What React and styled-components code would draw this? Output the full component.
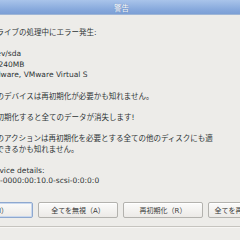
import React from "react";
import styled, { createGlobalStyle } from "styled-components";

const Global = createGlobalStyle`
  html, body { margin: 0; padding: 0; background: #edece9; }
  #root { width: 240px; height: 240px; overflow: hidden; }
`;

const Window = styled.div`
  width: 240px;
  height: 240px;
  overflow: hidden;
  display: flex;
  flex-direction: column;
  background: #edece9;
  font-family: "DejaVu Sans", "Noto Sans CJK JP", sans-serif;
  color: #2e3436;
`;

const TitleBar = styled.div`
  height: 14px;
  flex: none;
  display: flex;
  align-items: center;
  justify-content: center;
  background: linear-gradient(#a9c4ea, #86a8dc 70%, #7c9fd5);
  border-bottom: 1px solid #9fb6d6;
  color: #ffffff;
  font-size: 7.5px;
  text-shadow: 0 0 1px rgba(40, 70, 120, 0.6);
  padding-left: 3px;
`;

const Body = styled.div`
  flex: none;
  margin-left: -11px;
  padding-top: 13px;
  font-size: 7.5px;
  line-height: 10.6px;
  white-space: nowrap;
`;

const Para = styled.p`
  margin: 0 0 10.6px;
  &:last-child { margin-bottom: 0; }
`;

const ButtonRow = styled.div`
  flex: none;
  display: flex;
  gap: 5px;
  margin-left: -47px;
  margin-top: 15.5px;
`;

const Button = styled.div`
  flex: none;
  width: 80px;
  height: 16px;
  box-sizing: border-box;
  display: flex;
  align-items: center;
  justify-content: center;
  border-radius: 2px;
  border: 1px solid ${(p) => (p.$focused ? "#8ea8cf" : "#b3b2ae")};
  background: linear-gradient(#fbfbfa, #eceae7);
  box-shadow: ${(p) => (p.$focused ? "inset 0 0 0 1px #c9d8ee" : "inset 0 1px 0 #ffffff")};
  font-size: 7px;
  color: #3a3a3a;
  white-space: nowrap;
`;

const Footer = styled.div`
  flex: none;
  margin-top: 8px;
  border-top: 1px solid #c6c4bf;
  box-shadow: inset 0 1px 0 #f7f6f4;
  flex-grow: 1;
`;

export default function App() {
  return (
    <>
      <Global />
      <Window>
        <TitleBar>警告</TitleBar>
        <Body>
          <Para>ドライブの処理中にエラー発生:</Para>
          <Para>
            /dev/sda
            <br />
            10240MB
            <br />
            VMware, VMware Virtual S
          </Para>
          <Para>このデバイスは再初期化が必要かも知れません。</Para>
          <Para>再初期化すると全てのデータが消失します!</Para>
          <Para>
            このアクションは再初期化を必要とする全ての他のディスクにも適
            <br />
            用できるかも知れません。
          </Para>
          <Para>
            Device details:
            <br />
            pci-0000:00:10.0-scsi-0:0:0:0
          </Para>
        </Body>
        <ButtonRow>
          <Button $focused>無視（I）</Button>
          <Button>全てを無視（A）</Button>
          <Button>再初期化（R）</Button>
          <Button>全てを再初期化（L）</Button>
        </ButtonRow>
        <Footer />
      </Window>
    </>
  );
}
